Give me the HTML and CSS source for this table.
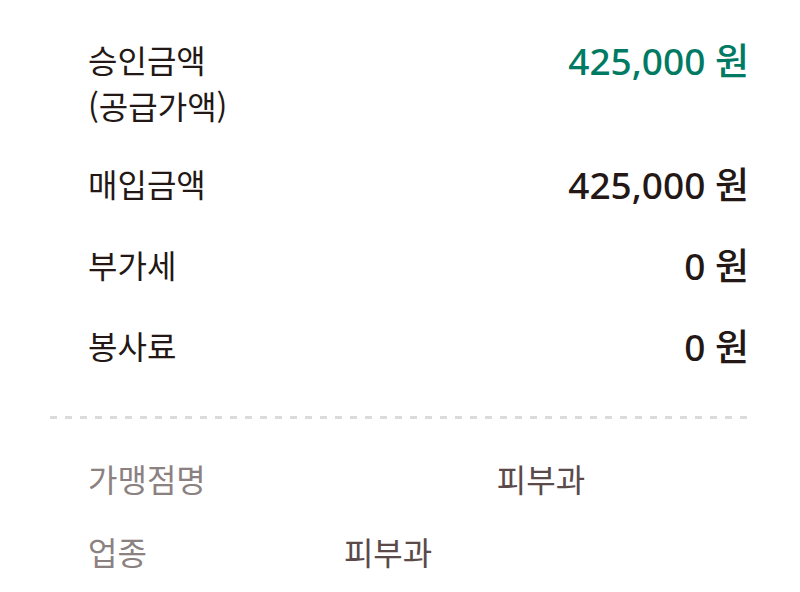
FILE: index.html
```html
<!DOCTYPE html>
<html lang="ko">
<head>
<meta charset="utf-8">
<link rel="stylesheet" href="styles.css">
</head>
<body>
<div class="page">
  <div class="summary">
    <div class="row">
      <div class="label">승인금액<br>(공급가액)</div>
      <div class="value green">425,000 원</div>
    </div>
    <div class="row">
      <div class="label">매입금액</div>
      <div class="value">425,000 원</div>
    </div>
    <div class="row">
      <div class="label">부가세</div>
      <div class="value">0 원</div>
    </div>
    <div class="row">
      <div class="label">봉사료</div>
      <div class="value">0 원</div>
    </div>
  </div>
  <div class="divider"></div>
  <div class="info">
    <div class="info-row">
      <div class="info-label">가맹점명</div>
      <div class="info-value wide">피부과</div>
    </div>
    <div class="info-row">
      <div class="info-label">업종</div>
      <div class="info-value narrow">피부과</div>
    </div>
  </div>
</div>
</body>
</html>
```
FILE: styles.css
```css
html, body {
  margin: 0;
  padding: 0;
  background: #ffffff;
}
.page {
  width: 700px;
  padding: 36px 50px 0 50px;
  font-family: "Noto Sans CJK KR", "Noto Sans", sans-serif;
}
.summary {
  display: flex;
  flex-direction: column;
  gap: 32px;
}
.row {
  display: flex;
  justify-content: space-between;
  align-items: flex-start;
  padding: 0 1px 0 38px;
}
.label {
  font-size: 32px;
  line-height: 46px;
  color: #231815;
}
.value {
  font-family: "Noto Sans", "Noto Sans CJK KR", sans-serif;
  font-size: 37px;
  font-weight: 500;
  line-height: 49px;
  color: #231815;
}
.value.green {
  color: #007a63;
}
.divider {
  margin-top: 45px;
  height: 3px;
  background: repeating-linear-gradient(to right, #dcdada 0 7px, transparent 7px 15px);
}
.info {
  display: flex;
  flex-direction: column;
  gap: 27px;
  margin-top: 36px;
  padding-left: 38px;
}
.info-row {
  display: flex;
  align-items: flex-start;
  font-size: 32px;
  line-height: 46px;
}
.info-label {
  color: #8c8181;
}
.info-value {
  color: #5b4a4a;
}
.info-value.wide {
  margin-left: 291px;
}
.info-value.narrow {
  margin-left: 197px;
}
```
